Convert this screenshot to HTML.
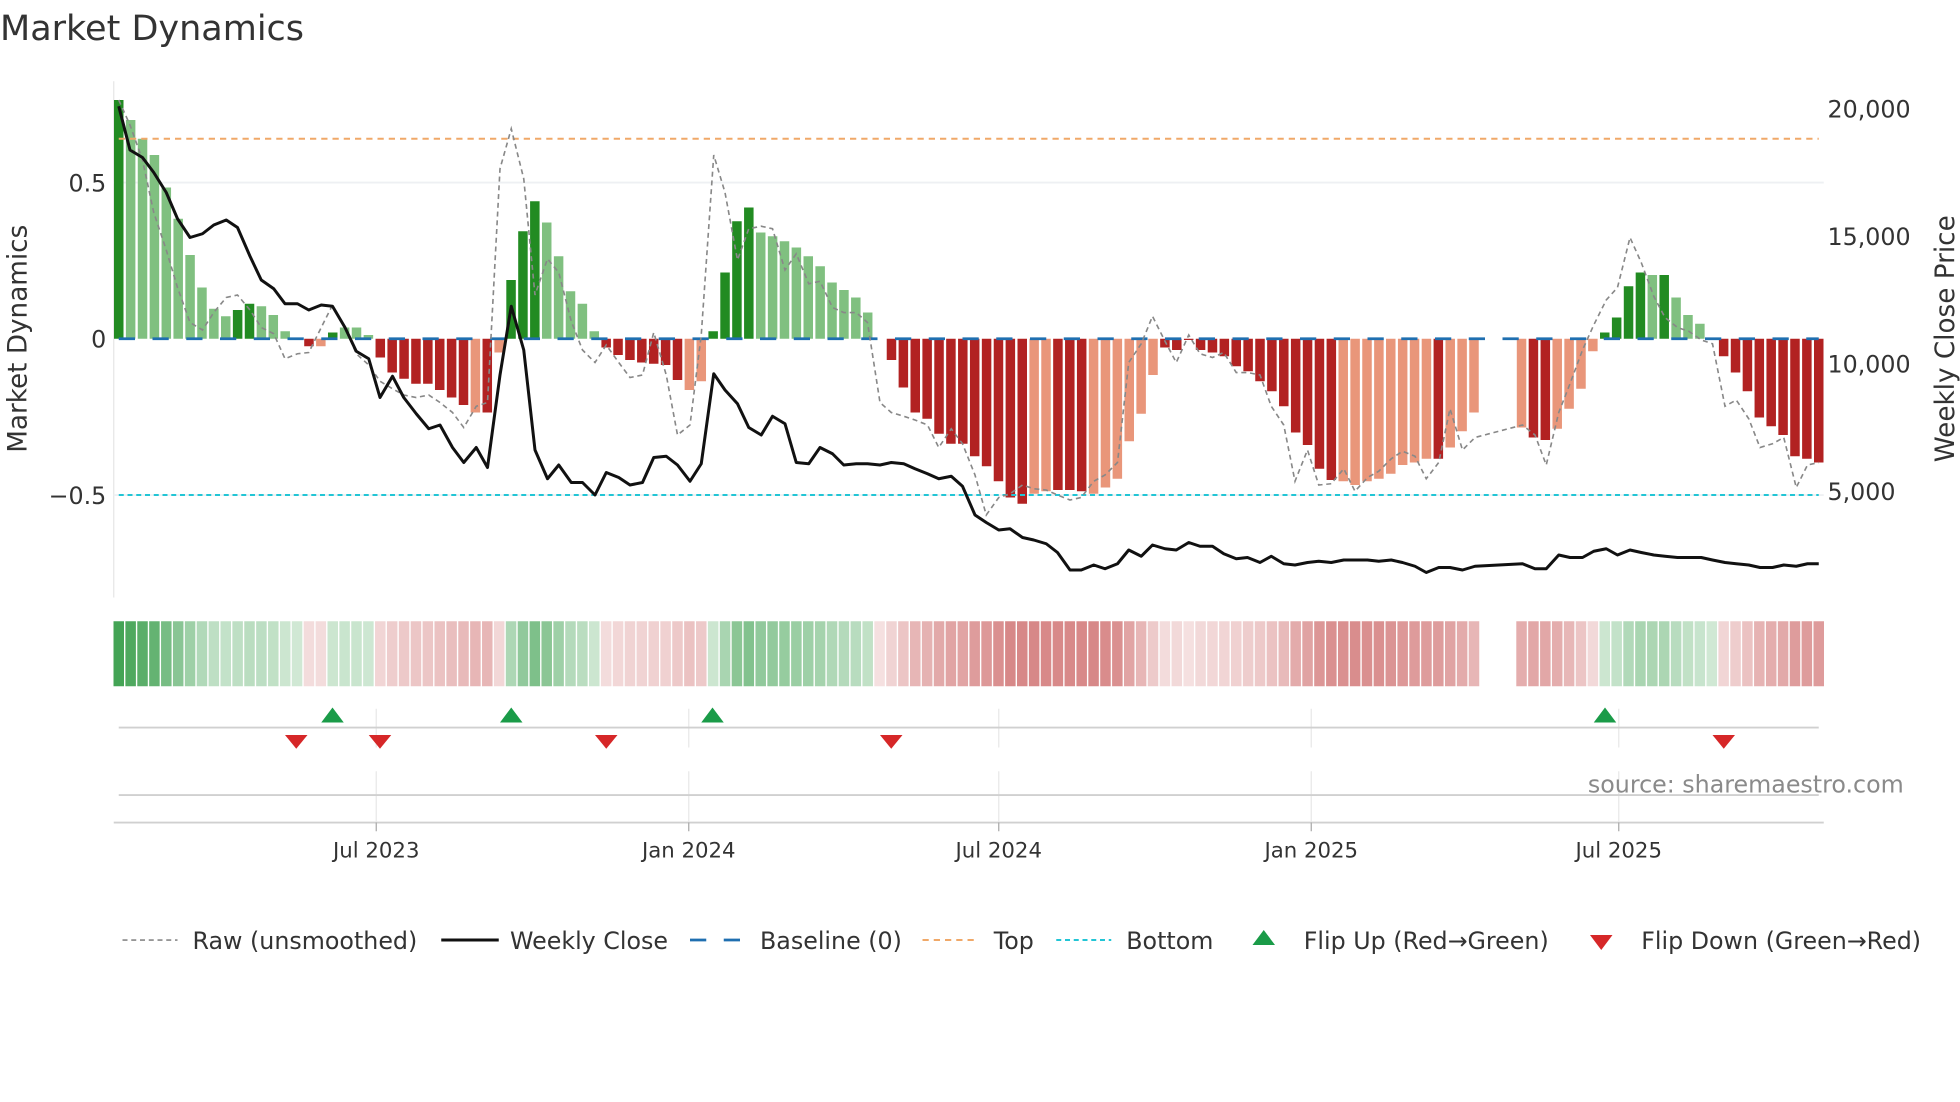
<!DOCTYPE html>
<html><head><meta charset="utf-8"><style>
html,body{margin:0;padding:0;background:#fff;width:1960px;height:1102px;overflow:hidden}
svg{display:block}
text{font-family:"DejaVu Sans","Liberation Sans",sans-serif;fill:#333}
</style></head><body>
<svg id="s" width="1960" height="1102" viewBox="0 0 1568 881.6" xmlns="http://www.w3.org/2000/svg">
<text x="0" y="32" font-size="28">Market Dynamics</text>
<line x1="91" y1="65" x2="91" y2="478" stroke="#e6e6e6" stroke-width="1"/>
<line x1="91" y1="146" x2="1459" y2="146" stroke="#eef0f3" stroke-width="1.5"/>
<line x1="91" y1="396" x2="1459" y2="396" stroke="#eef0f3" stroke-width="1.5"/>
<g id="bars"></g>
<line x1="95" y1="271" x2="1455" y2="271" stroke="#1f6fb0" stroke-width="2.2" stroke-dasharray="13,14"/>
<line x1="95" y1="111" x2="1455" y2="111" stroke="#f0a868" stroke-width="1.6" stroke-dasharray="5,4"/>
<line x1="95" y1="396" x2="1455" y2="396" stroke="#22c5d5" stroke-width="1.6" stroke-dasharray="4,3"/>
<polyline id="raw" fill="none" stroke="#888" stroke-width="1.3" stroke-dasharray="4,3"/>
<polyline id="close" fill="none" stroke="#111" stroke-width="2.4" stroke-linejoin="round"/>
<text x="85" y="153" font-size="19" text-anchor="end">0.5</text>
<text x="85" y="278" font-size="19" text-anchor="end">0</text>
<text x="85" y="403" font-size="19" text-anchor="end">−0.5</text>
<text x="1462" y="94" font-size="19">20,000</text>
<text x="1462" y="196" font-size="19">15,000</text>
<text x="1462" y="298" font-size="19">10,000</text>
<text x="1462" y="400" font-size="19">5,000</text>
<text transform="translate(21,271) rotate(-90)" font-size="21" text-anchor="middle">Market Dynamics</text>
<text transform="translate(1563,271) rotate(-90)" font-size="21" text-anchor="middle">Weekly Close Price</text>
<g id="strip"></g>
<g stroke="#e8e8e8" stroke-width="1">
<line x1="301" y1="567" x2="301" y2="598"/><line x1="551" y1="567" x2="551" y2="598"/><line x1="799" y1="567" x2="799" y2="598"/><line x1="1049" y1="567" x2="1049" y2="598"/><line x1="1295" y1="567" x2="1295" y2="598"/>
<line x1="301" y1="617" x2="301" y2="657"/><line x1="551" y1="617" x2="551" y2="657"/><line x1="799" y1="617" x2="799" y2="657"/><line x1="1049" y1="617" x2="1049" y2="657"/><line x1="1295" y1="617" x2="1295" y2="657"/>
</g>
<line x1="95" y1="582" x2="1455" y2="582" stroke="#d0d0d0" stroke-width="1.5"/>
<line x1="95" y1="636" x2="1455" y2="636" stroke="#d0d0d0" stroke-width="1.5"/>
<line x1="91" y1="658" x2="1459" y2="658" stroke="#d0d0d0" stroke-width="1.5"/>
<g stroke="#aaa" stroke-width="1"><line x1="301" y1="658" x2="301" y2="665"/><line x1="551" y1="658" x2="551" y2="665"/><line x1="799" y1="658" x2="799" y2="665"/><line x1="1049" y1="658" x2="1049" y2="665"/><line x1="1295" y1="658" x2="1295" y2="665"/></g>
<g id="flips"></g>
<text x="1523" y="634" font-size="19" text-anchor="end" style="fill:#8a8a8a">source: sharemaestro.com</text>
<g font-size="17" text-anchor="middle">
<text x="301" y="686">Jul 2023</text><text x="551" y="686">Jan 2024</text><text x="799" y="686">Jul 2024</text><text x="1049" y="686">Jan 2025</text><text x="1295" y="686">Jul 2025</text>
</g>
<g font-size="19">
<line x1="98" y1="752" x2="142" y2="752" stroke="#888" stroke-width="1.3" stroke-dasharray="4,3"/><text x="154" y="759">Raw (unsmoothed)</text>
<line x1="353" y1="752" x2="399" y2="752" stroke="#111" stroke-width="2.4"/><text x="408" y="759">Weekly Close</text>
<line x1="552" y1="752" x2="596" y2="752" stroke="#1f6fb0" stroke-width="2.2" stroke-dasharray="13,14"/><text x="608" y="759">Baseline (0)</text>
<line x1="738" y1="752" x2="782" y2="752" stroke="#f0a868" stroke-width="1.6" stroke-dasharray="5,4"/><text x="795" y="759">Top</text>
<line x1="845" y1="752" x2="889" y2="752" stroke="#22c5d5" stroke-width="1.6" stroke-dasharray="4,3"/><text x="901" y="759">Bottom</text>
<polygon points="1011,744 1002,756 1020,756" fill="#1a9b48"/><text x="1043" y="759">Flip Up (Red→Green)</text>
<polygon points="1272,748 1290,748 1281,760" fill="#d62728"/><text x="1313" y="759">Flip Down (Green→Red)</text>
</g>
</svg>
<script>
(function(){
var NS="http://www.w3.org/2000/svg";
function el(p,t,a){var e=document.createElementNS(NS,t);for(var k in a)e.setAttribute(k,a[k]);p.appendChild(e);return e;}
var B=[[80,'D'],[96,'L'],[111,'L'],[124,'L'],[150,'L'],[175,'L'],[204,'L'],[230,'L'],[247,'L'],[253,'L'],[248,'D'],[243,'D'],[245,'L'],[252,'L'],[265,'L'],[271,'L'],[277,'R'],[277,'S'],[266,'D'],[262,'L'],[262,'L'],[268,'L'],[286,'R'],[298,'R'],[303,'R'],[307,'R'],[307,'R'],[312,'R'],[318,'R'],[324,'R'],[330,'S'],[330,'R'],[282,'S'],[224,'D'],[185,'D'],[161,'D'],[178,'L'],[205,'L'],[233,'L'],[243,'L'],[265,'L'],[278,'R'],[284,'R'],[288,'R'],[290,'R'],[291,'R'],[292,'R'],[304,'R'],[312,'S'],[305,'S'],[265,'D'],[218,'D'],[177,'D'],[166,'D'],[186,'L'],[189,'L'],[193,'L'],[198,'L'],[205,'L'],[213,'L'],[226,'L'],[232,'L'],[238,'L'],[250,'L'],[271,'R'],[288,'R'],[310,'R'],[330,'R'],[335,'R'],[347,'R'],[355,'R'],[355,'R'],[365,'R'],[373,'R'],[385,'R'],[398,'R'],[403,'R'],[395,'S'],[393,'S'],[392,'R'],[392,'R'],[393,'R'],[395,'S'],[390,'S'],[383,'S'],[353,'S'],[331,'S'],[300,'S'],[278,'R'],[280,'R'],[272,'R'],[280,'R'],[282,'R'],[285,'R'],[293,'R'],[297,'R'],[305,'R'],[313,'R'],[325,'R'],[346,'R'],[356,'R'],[375,'R'],[384,'R'],[385,'S'],[388,'S'],[385,'S'],[383,'S'],[379,'S'],[372,'S'],[370,'S'],[367,'S'],[367,'R'],[358,'S'],[345,'S'],[330,'S'],null,null,null,[342,'S'],[350,'R'],[352,'R'],[343,'S'],[327,'S'],[311,'S'],[281,'S'],[266,'D'],[254,'D'],[229,'D'],[218,'D'],[220,'L'],[220,'D'],[238,'L'],[252,'L'],[259,'L'],[271,'L'],[285,'R'],[298,'R'],[313,'R'],[334,'R'],[341,'R'],[348,'R'],[365,'R'],[367,'R'],[370,'R']];
var col={D:'#228b22',L:'#80c080',R:'#b22222',S:'#e9967a'};
var gb=document.getElementById('bars'),gs=document.getElementById('strip');
var n=B.length,step=(1455-95)/(n-1);
for(var i=0;i<n;i++){var b=B[i];if(!b)continue;var x=95+step*i,y=b[0],t=b[1];
 var yt=Math.min(y,271),h=Math.abs(y-271);
 if(h>=1)el(gb,'rect',{x:x-3.8,y:yt,width:7.6,height:h,fill:col[t]});
 var v=(271-y)/250,a;
 if(t=='D'||t=='L'){a=0.22+0.65*Math.min(Math.abs(v)/0.76,1);el(gs,'rect',{x:x-4.2,y:497,width:8.4,height:52,fill:'rgba(40,150,60,'+a.toFixed(2)+')'});}
 else{a=0.15+0.42*Math.min(Math.abs(v)/0.5,1);el(gs,'rect',{x:x-4.2,y:497,width:8.4,height:52,fill:'rgba(185,45,45,'+a.toFixed(2)+')'});}
}
var C=[[95,85],[104,120],[114,126],[123,138],[133,154],[142,175],[152,190],[162,187],[171,180],[181,176],[190,182],[200,205],[209,224],[219,231],[228,243],[238,243],[247,248],[257,244],[266,245],[276,262],[285,281],[295,287],[304,318],[314,301],[323,318],[333,331],[343,343],[352,340],[362,358],[371,370],[381,358],[390,374],[400,300],[409,245],[419,280],[428,360],[438,383],[447,372],[457,386],[466,386],[476,396],[485,378],[495,382],[504,388],[514,386],[523,366],[533,365],[542,372],[552,385],[561,371],[571,299],[580,312],[590,323],[599,342],[609,348],[618,333],[628,339],[637,370],[647,371],[656,358],[666,363],[675,372],[685,371],[694,371],[704,372],[713,370],[723,371],[732,375],[742,379],[751,383],[761,381],[770,389],[780,412],[789,418],[799,424],[808,423],[818,430],[827,432],[837,435],[846,442],[856,456],[865,456],[875,452],[884,455],[894,451],[903,440],[913,445],[922,436],[932,439],[941,440],[951,434],[960,437],[970,437],[979,443],[989,447],[998,446],[1008,450],[1017,445],[1027,451],[1036,452],[1046,450],[1055,449],[1065,450],[1075,448],[1084,448],[1094,448],[1103,449],[1113,448],[1122,450],[1132,453],[1141,458],[1151,454],[1160,454],[1170,456],[1180,453],[1218,451],[1228,455],[1237,455],[1247,444],[1256,446],[1266,446],[1275,441],[1285,439],[1294,444],[1304,440],[1313,442],[1323,444],[1332,445],[1342,446],[1351,446],[1361,446],[1370,448],[1380,450],[1389,451],[1399,452],[1408,454],[1418,454],[1427,452],[1437,453],[1446,451],[1455,451]];
var R=[[95,80],[104,100],[114,128],[123,170],[133,200],[142,230],[152,258],[162,264],[171,250],[181,238],[190,236],[200,248],[209,262],[219,267],[228,287],[238,283],[247,282],[257,262],[266,244],[276,262],[285,283],[295,292],[304,305],[314,311],[323,316],[333,318],[343,316],[352,322],[362,330],[371,342],[381,325],[390,322],[400,135],[409,103],[419,143],[428,236],[438,207],[447,218],[457,257],[466,280],[476,290],[485,276],[495,290],[504,302],[514,300],[523,266],[533,300],[542,348],[552,340],[561,268],[571,124],[580,154],[590,208],[599,183],[609,181],[618,183],[628,216],[637,203],[647,227],[656,225],[666,246],[675,250],[685,250],[694,258],[704,322],[713,330],[723,333],[732,336],[742,340],[751,358],[761,343],[770,355],[780,380],[789,412],[799,398],[808,395],[818,388],[827,391],[837,392],[846,396],[856,400],[865,398],[875,385],[884,380],[894,370],[903,290],[913,275],[922,253],[932,273],[941,290],[951,268],[960,283],[970,286],[979,282],[989,298],[998,298],[1008,300],[1017,325],[1027,340],[1036,385],[1046,360],[1055,388],[1065,387],[1075,375],[1084,393],[1094,382],[1103,377],[1113,367],[1122,361],[1132,365],[1141,383],[1151,370],[1160,327],[1170,360],[1180,350],[1218,340],[1228,348],[1237,372],[1247,330],[1256,307],[1266,280],[1275,260],[1285,240],[1294,230],[1304,190],[1313,210],[1323,237],[1332,254],[1342,262],[1351,265],[1361,272],[1370,275],[1380,325],[1389,320],[1399,335],[1408,358],[1418,355],[1427,350],[1437,390],[1446,372],[1455,370]];
document.getElementById('close').setAttribute('points',C.map(function(p){return p.join(',')}).join(' '));
document.getElementById('raw').setAttribute('points',R.map(function(p){return p.join(',')}).join(' '));
var gf=document.getElementById('flips');
[266,409,570,1284].forEach(function(x){el(gf,'polygon',{points:(x)+',566 '+(x-9)+',578 '+(x+9)+',578',fill:'#1a9b48'});});
[237,304,485,713,1379].forEach(function(x){el(gf,'polygon',{points:(x-9)+',588 '+(x+9)+',588 '+x+',599',fill:'#d62728'});});
})();
</script>
</body></html>
